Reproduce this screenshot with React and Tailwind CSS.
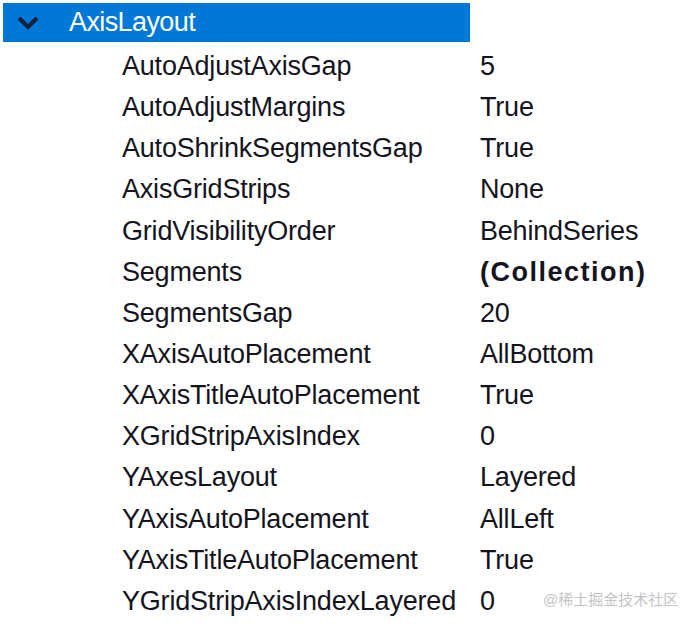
const rows = [
  ["AutoAdjustAxisGap", "5"],
  ["AutoAdjustMargins", "True"],
  ["AutoShrinkSegmentsGap", "True"],
  ["AxisGridStrips", "None"],
  ["GridVisibilityOrder", "BehindSeries"],
  ["Segments", "(Collection)", true],
  ["SegmentsGap", "20"],
  ["XAxisAutoPlacement", "AllBottom"],
  ["XAxisTitleAutoPlacement", "True"],
  ["XGridStripAxisIndex", "0"],
  ["YAxesLayout", "Layered"],
  ["YAxisAutoPlacement", "AllLeft"],
  ["YAxisTitleAutoPlacement", "True"],
  ["YGridStripAxisIndexLayered", "0"],
];

export default function App() {
  return (
    <div
      className="relative w-[691px] h-[625px] bg-white overflow-hidden pt-[3px] pl-[3px]"
      style={{ fontFamily: '"Liberation Sans", Arial, sans-serif' }}
    >
      <div className="flex items-center w-[467px] h-[39px] bg-[#0078d7]">
        <svg width="22" height="14" viewBox="0 0 22 14" className="ml-[14px]">
          <path d="M2 2 L11 11 L20 2" fill="none" stroke="#17203a" strokeWidth="4" />
        </svg>
        <span className="ml-[30px] text-[27px] tracking-[-0.6px] text-white leading-none">AxisLayout</span>
      </div>
      <div className="mt-[4px]">
        {rows.map(([k, v, bold]) => (
          <div key={k} className="flex items-center h-[41.15px] text-[27px] text-[#141420] leading-none tracking-[-0.2px]">
            <span className="w-[477px] pl-[119px]">{k}</span>
            <span className={bold ? "font-bold tracking-[1.5px]" : ""}>{v}</span>
          </div>
        ))}
      </div>
      <div
        className="absolute left-[543px] top-[592px] text-[15px] text-[#c4c4c4] leading-none"
        style={{ fontFamily: '"Liberation Sans", "Noto Sans CJK SC", sans-serif' }}
      >
        @稀土掘金技术社区
      </div>
    </div>
  );
}
